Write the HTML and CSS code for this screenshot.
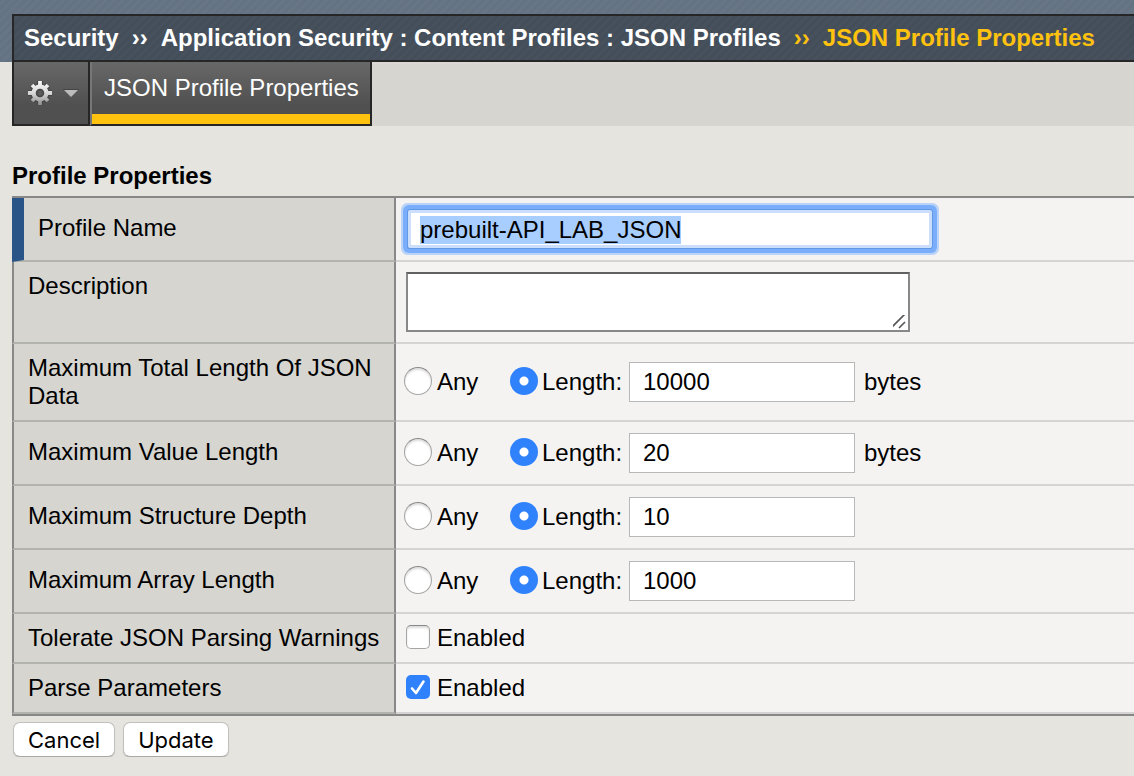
FILE: index.html
```html
<!DOCTYPE html>
<html lang="en">
<head>
<meta charset="utf-8">
<title>JSON Profile Properties</title>
<link rel="stylesheet" href="styles.css">
</head>
<body>
<header class="masthead">
  <nav class="breadcrumb" aria-label="Breadcrumb">
    <a href="#">Security</a><span class="sep">››</span><a href="#">Application Security : Content Profiles : JSON Profiles</a><span class="sep current">››</span><a class="current" href="#" aria-current="page">JSON Profile Properties</a>
  </nav>
</header>
<nav class="tabs" aria-label="Sections">
  <button class="tab-menu" type="button" aria-label="Options">
    <svg width="28" height="28" viewBox="0 0 28 28" aria-hidden="true">
      <defs>
        <linearGradient id="metal" gradientUnits="userSpaceOnUse" x1="0" y1="2" x2="0" y2="26"><stop offset="0" stop-color="#fafafa"/><stop offset="0.500" stop-color="#d8d8d8"/><stop offset="1" stop-color="#8c8c8c"/></linearGradient>
        <path id="teeth" d="M14 2v24M2 14h24.010M6 6l16 16M22 6L6 22"/>
      </defs>
      <use href="#teeth" stroke="#454545" stroke-width="6"/>
      <circle cx="14" cy="14" r="9.500" fill="#454545"/>
      <use href="#teeth" stroke="url(#metal)" stroke-width="3.800"/>
      <circle cx="14" cy="14" r="8.500" fill="url(#metal)"/>
      <circle cx="14" cy="14" r="3.500" fill="#5a5a5a" stroke="#444" stroke-width="1.500"/>
    </svg>
    <svg width="16" height="10" viewBox="0 0 16 10" aria-hidden="true"><path fill="#bcbcbc" d="M1 2h14L8 9z"/><path fill="#444" d="M0 1h16v1H0z"/></svg>
  </button>
  <a class="tab" href="#">JSON Profile Properties</a>
  <div class="tab-fill"></div>
</nav>
<main>
  <h1>Profile Properties</h1>
  <form>
    <table class="properties">
      <tr class="required tall">
        <th scope="row"><label for="name">Profile Name</label></th>
        <td><input class="name" id="name" type="text" value="prebuilt-API_LAB_JSON" spellcheck="false" autofocus></td>
      </tr>
      <tr class="top">
        <th scope="row"><label for="description">Description</label></th>
        <td><textarea id="description"></textarea></td>
      </tr>
      <tr>
        <th scope="row">Maximum Total Length Of JSON Data</th>
        <td><div class="field">
          <label class="any"><input type="radio" name="total">Any</label>
          <label class="length"><input type="radio" name="total" checked>Length:</label>
          <input class="number" type="text" value="10000" aria-label="Total length"><span>bytes</span>
        </div></td>
      </tr>
      <tr class="tall">
        <th scope="row">Maximum Value Length</th>
        <td><div class="field">
          <label class="any"><input type="radio" name="value">Any</label>
          <label class="length"><input type="radio" name="value" checked>Length:</label>
          <input class="number" type="text" value="20" aria-label="Value length"><span>bytes</span>
        </div></td>
      </tr>
      <tr class="tall">
        <th scope="row">Maximum Structure Depth</th>
        <td><div class="field">
          <label class="any"><input type="radio" name="depth">Any</label>
          <label class="length"><input type="radio" name="depth" checked>Length:</label>
          <input class="number" type="text" value="10" aria-label="Structure depth">
        </div></td>
      </tr>
      <tr class="tall">
        <th scope="row">Maximum Array Length</th>
        <td><div class="field">
          <label class="any"><input type="radio" name="array">Any</label>
          <label class="length"><input type="radio" name="array" checked>Length:</label>
          <input class="number" type="text" value="1000" aria-label="Array length">
        </div></td>
      </tr>
      <tr>
        <th scope="row">Tolerate JSON Parsing Warnings</th>
        <td><label class="check"><input type="checkbox">Enabled</label></td>
      </tr>
      <tr>
        <th scope="row">Parse Parameters</th>
        <td><label class="check"><input type="checkbox" checked>Enabled</label></td>
      </tr>
    </table>
    <div class="actions">
      <button type="button">Cancel</button>
      <button type="button">Update</button>
    </div>
  </form>
</main>
<script src="script.js"></script>
</body>
</html>
```
FILE: styles.css
```css
* { box-sizing: border-box; }

body {
  margin: 0;
  background: #e5e4df;
  color: #000;
  font: 24px/28px "Liberation Sans", Arial, sans-serif;
}

a { color: inherit; text-decoration: none; }

input, textarea, button { margin: 0; font: inherit; color: inherit; }

.masthead {
  padding: 14px 0 0 12px;
  background: repeating-linear-gradient(135deg, #637181, #687787 3px, #637181 6px);
}

.breadcrumb {
  display: flex;
  height: 48px;
  padding: 8px 0 0 10px;
  border: 2px solid #262626;
  border-right: 0;
  background: repeating-linear-gradient(135deg, #434d58, #47525e 3px, #434d58 6px);
  color: #fff;
  font-weight: bold;
  white-space: nowrap;
}

.sep { margin: 0 13px; }

.breadcrumb .current { color: #ffc20e; }

.tabs {
  display: flex;
  height: 64px;
  padding-left: 12px;
}

.tab-menu, .tab {
  border: 2px solid #262626;
  border-top: 0;
  background: linear-gradient(#686868, #505050 70%);
  color: #fff;
}

.tab-menu {
  display: flex;
  align-items: center;
  gap: 9px;
  width: 78px;
  padding: 0 0 0 12px;
}

.tab {
  padding: 12px 11px 0 12px;
  border-left-color: #777;
  box-shadow: inset 0 -10px #ffc20e;
}

.tab-fill {
  flex: 1;
  border-top: 2px solid #dad7d5;
  background: #d6d5d0;
}

main { padding: 36px 0 0 12px; }

h1 { margin: 0 0 6px; font-size: 24px; line-height: 28px; }

.properties {
  width: 100%;
  border-spacing: 0;
  border-top: 2px solid #888;
  border-bottom: 2px solid #888;
}

th {
  width: 384px;
  padding: 10px 12px 10px 14px;
  border: solid #888;
  border-width: 0 2px 2px;
  border-bottom-color: #b3b3ae;
  background: #d6d5d0;
  font-weight: normal;
  text-align: left;
}

td {
  padding: 0 8px;
  border-bottom: 2px solid #d5d4d2;
  background: #f5f3f2;
}

.tall th { padding-top: 16px; padding-bottom: 18px; }
.top th { vertical-align: top; }
.top td { padding-top: 10px; padding-bottom: 10px; }
.required th { border-left: 12px solid #295488; }

.name {
  display: block;
  width: 524px;
  max-width: 100%;
  height: 38px;
  margin-left: 4px;
  padding: 2px 9px 0;
  border: 3px solid #cbdffc;
  border-radius: 2px;
  outline: 0;
  background: #fff;
  box-shadow: 0 0 0 1px #6298e8, 0 0 0 5px #7aaefb, 0 0 0 7px #bad3f8;
}

.name::selection { background: #a8cdff; color: #000; }

textarea {
  display: block;
  width: 504px;
  max-width: 100%;
  height: 60px;
  margin-left: 2px;
  border: 2px solid #888;
  border-top-color: #606060;
  border-radius: 0;
  background: #fff;
  outline: 0;
}

textarea::-webkit-scrollbar { width: 20px; height: 20px; }

textarea::-webkit-resizer {
  background: url("data:image/svg+xml,%3Csvg xmlns='http://www.w3.org/2000/svg' width='20' height='20'%3E%3Cpath d='M3 18L17 4M11 18l6-6' fill='none' stroke='%23555' stroke-width='1.600'/%3E%3C/svg%3E") right bottom no-repeat;
}

.field, .field label, .check { display: flex; align-items: center; }
.any { width: 106px; gap: 5px; }
.length { width: 119px; gap: 4px; }
.check { gap: 7px; padding-left: 2px; }

input[type="radio"], input[type="checkbox"] {
  flex: none;
  appearance: none;
  margin-bottom: 2px;
  border: 1px solid #a5a5a5;
  border-top-color: #888;
  background: #fff;
  box-shadow: inset 0 2px 2px #ddd;
}

input[type="radio"] { width: 28px; height: 28px; border-radius: 50%; }
input[type="checkbox"] { width: 24px; height: 24px; border-radius: 5px; }

input[type="radio"]:checked {
  border: 0;
  background: radial-gradient(circle, #fff 4px, #2f82fb 5px);
  box-shadow: none;
}

input[type="checkbox"]:checked {
  border: 0;
  background: #2f82fb url("data:image/svg+xml,%3Csvg xmlns='http://www.w3.org/2000/svg' viewBox='0 0 24 24'%3E%3Cpath d='M6 13.500l4 4.500L17.500 6.500' fill='none' stroke='white' stroke-width='2.600' stroke-linecap='round' stroke-linejoin='round'/%3E%3C/svg%3E");
  box-shadow: none;
}

.number {
  width: 226px;
  height: 40px;
  margin-right: 9px;
  padding: 0 13px;
  border: 1px solid #b8b8b8;
  background: #fff;
}

.actions { display: flex; gap: 8px; padding: 6px 0 0 1px; }

.actions button {
  height: 35px;
  padding: 0 14px;
  border: 1px solid #c0c0bd;
  border-bottom-color: #a9a9a6;
  border-radius: 7px;
  background: #fff;
  box-shadow: 0 1px 1px #c9c9c5;
  font: 22px/28px Inter, "Liberation Sans", sans-serif;
}
```
FILE: script.js
```js
const nameField = document.getElementById("name");
nameField.focus();
nameField.select();
```
